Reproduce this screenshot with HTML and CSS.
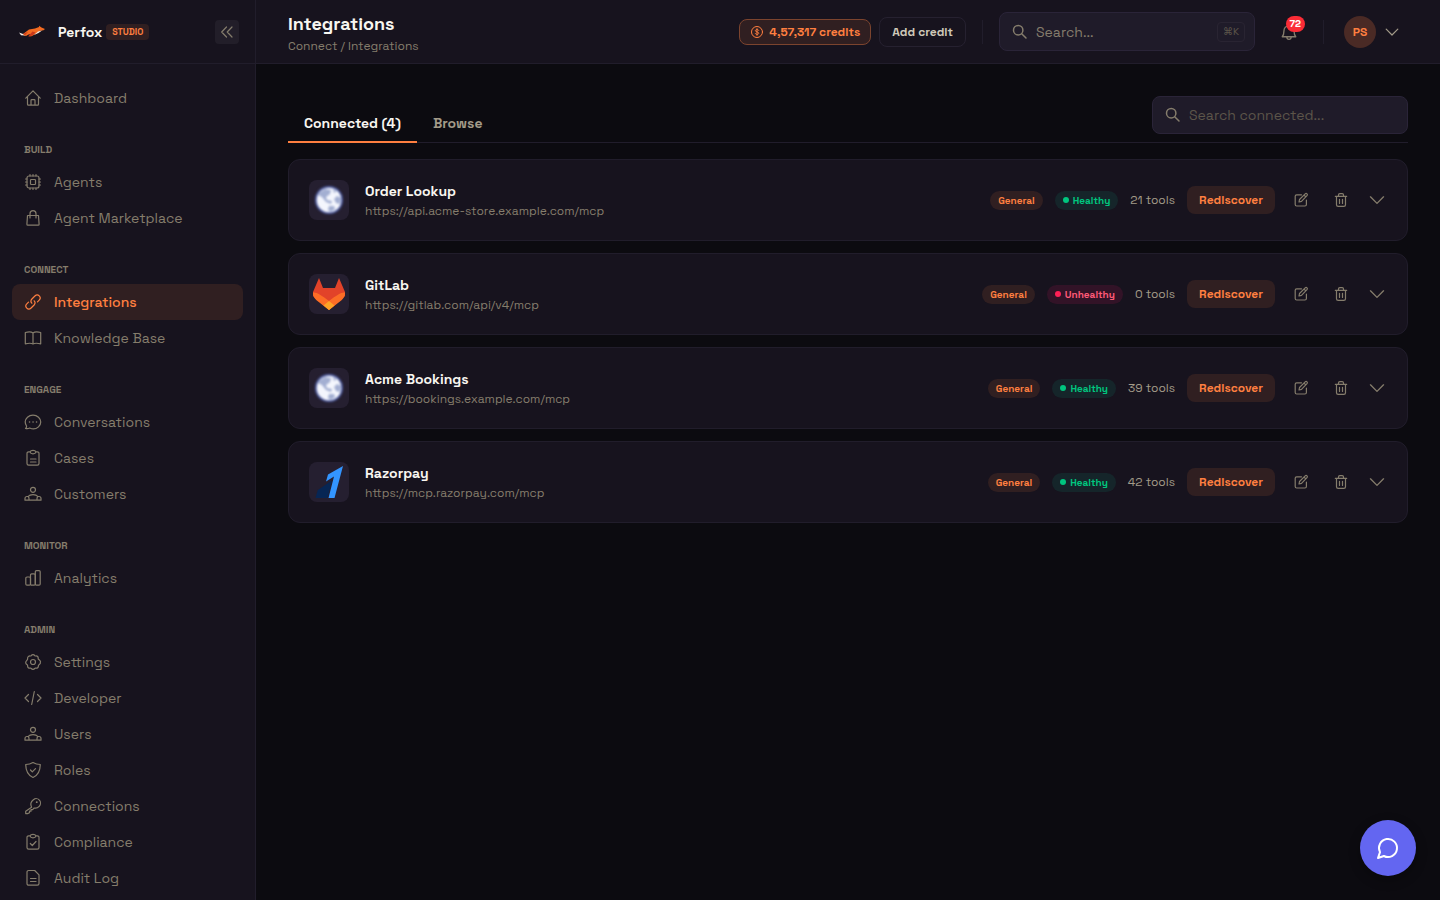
FILE: index.html
```html
<!DOCTYPE html>
<html lang="en">
  <head>
    <meta charset="UTF-8" />
    <meta name="viewport" content="width=device-width, initial-scale=1.0" />
    <title>Integrations - Perfox Studio</title>
    <link rel="stylesheet" href="styles.css">
  </head>
  <body>
    <!-- Shared icons -->
    <svg class="sprite" aria-hidden="true">
      <symbol id="i-search" viewBox="0 0 16 16"><circle cx="6.2" cy="6.2" r="4.700" /><path d="M9.700 9.700l4.300 4.300" /></symbol>
      <symbol id="i-users" viewBox="0 0 18 18"><circle cx="9" cy="4.800" r="2.500" /><path d="M1 15.200h16v-1.700c0-1.200-.8-2-2-2h-1.200C13 10.500 11.500 9.700 9 9.700s-4 .8-4.800 1.800H3c-1.200 0-2 .8-2 2zM5 15.200v-1.500c0-.9-.2-1.600-.8-2.200M13 15.200v-1.500c0-.9.2-1.600.8-2.200" /></symbol>
      <symbol id="i-chevron" viewBox="0 0 16 16"><path d="M2.200 5.200L8 11l5.800-5.800" /></symbol>
      <symbol id="i-edit" viewBox="0 0 16 16"><path d="M8.500 2.800H3.700c-1 0-1.500.6-1.500 1.500v8.200c0 .9.600 1.500 1.500 1.500h8.200c.9 0 1.500-.6 1.500-1.500V8M6 10l.5-2.500 5.700-5.700c.5-.5 1.300-.5 1.800 0s.5 1.300 0 1.800L8.500 9.400zM11 3l1.800 1.800" /></symbol>
      <symbol id="i-trash" viewBox="0 0 16 16"><path d="M2.300 4.300h11.400M3.500 4.300v8.400c0 1 .7 1.700 1.700 1.700h5.600c1 0 1.700-.7 1.700-1.700V4.300M5.500 4.300V3c0-.8.500-1.300 1.300-1.300h2.400c.8 0 1.300.5 1.300 1.300v1.300M6.500 7.300v4.200M9.500 7.300v4.200" /></symbol>
      <symbol id="i-globe" viewBox="0 0 32 32">
        <circle cx="16" cy="16" r="14" fill="#4d5b9f" stroke="none" />
        <circle cx="16" cy="16" r="12.300" fill="#f4f6fd" stroke="none" />
        <path d="M7 8l5-3 6 1-1 4-4 3 1 3 5 1-1 3-5-2-4-5-4-2zM20 5l4 2-3 2zM24 12l4 2-1 6-4-1-2-4zM16 22l5 0 1 3-4 3-3-2z" fill="#a3afd2" stroke="none" />
      </symbol>
    </svg>

    <div class="app">
      <aside class="sidebar">
        <div class="brand">
          <svg class="brand-logo" viewBox="0 0 28 14" aria-hidden="true">
            <path d="M1 7.500L5 9l3.500-.3L7 10.500l-4-.2z" fill="#f4ede6" />
            <path d="M5 9l6-4.500 6-1 4-1.500L21 .8l2.500 1.700L27 4l-1.500 1.300-4 .7-4 3-4 2.200-2.500.3 2.500-2.500-3 .5L8 11l-1.500-.5z" fill="#f26a21" />
            <path d="M10 11.500l4.500-5 3 1-3 3zM5 9l5-2-3 3z" fill="#c8371b" />
            <path d="M16 10l4-3.500 4-1-3.500 2.500z" fill="#f4ede6" />
          </svg>
          <span class="brand-name">Perfox</span>
          <span class="brand-tag">STUDIO</span>
          <button class="collapse" type="button" aria-label="Collapse sidebar">
            <svg class="icon" viewBox="0 0 16 16"><path d="M7.500 3L2.700 8l4.800 5M13 3L8.200 8l4.800 5" /></svg>
          </button>
        </div>

        <nav class="nav" aria-label="Main">
          <a class="nav-item" href="#">
            <svg class="nav-icon" viewBox="0 0 18 18"><path d="M1.800 9.200L9 1.800l7.200 7.400M3.500 7.800v7.500c0 .6.300.9.900.9h9.200c.6 0 .9-.3.900-.9V7.800M7 16v-4.500c0-.5.300-.8.800-.8h2.400c.5 0 .8.300.8.800V16" /></svg>
            Dashboard
          </a>

          <h2 class="nav-title">BUILD</h2>
          <a class="nav-item" href="#">
            <svg class="nav-icon" viewBox="0 0 18 18"><rect x="3" y="3" width="12" height="12" rx="2" /><rect x="6.500" y="6.500" width="5" height="5" rx=".8" /><path d="M6 3V1.500M9 3V1.500M12 3V1.500M6 16.500V15M9 16.500V15M12 16.500V15M3 6H1.500M3 9H1.500M3 12H1.500M16.500 6H15M16.500 9H15M16.500 12H15" /></svg>
            Agents
          </a>
          <a class="nav-item" href="#">
            <svg class="nav-icon" viewBox="0 0 18 18"><path d="M3.500 6.500h11l.6 8.700c0 .6-.3 1-.9 1H3.800c-.6 0-.9-.4-.9-1zM6 9V4.800C6 3 7.300 1.700 9 1.700s3 1.300 3 3.100V9" /></svg>
            Agent Marketplace
          </a>

          <h2 class="nav-title">CONNECT</h2>
          <a class="nav-item active" href="#" aria-current="page">
            <svg class="nav-icon" viewBox="0 0 18 18"><path d="M7.800 10.200c-1.100-1.300-1-3 .1-4.200l3-3c1.300-1.300 3.200-1.300 4.300-.2 1.200 1.200 1.200 3.100 0 4.300l-1.700 1.700M10.200 7.800c1.100 1.300 1 3-.1 4.200l-3 3c-1.300 1.300-3.200 1.300-4.300.2-1.200-1.200-1.200-3.100 0-4.300l1.700-1.700" /></svg>
            Integrations
          </a>
          <a class="nav-item" href="#">
            <svg class="nav-icon" viewBox="0 0 18 18"><path d="M9 4C7.500 2.800 4.500 2.700 1.300 3.500v11.300c3.200-.7 6.200-.7 7.700.2 1.500-.9 4.500-.9 7.700-.2V3.500C13.500 2.700 10.500 2.800 9 4zM9 4v11" /></svg>
            Knowledge Base
          </a>

          <h2 class="nav-title">ENGAGE</h2>
          <a class="nav-item" href="#">
            <svg class="nav-icon" viewBox="0 0 18 18"><path d="M1.500 15.500c1-.8 1.300-1.800.9-2.800C.800 10 1 6.500 3.500 4.200 6.500 1.500 11.500 1.500 14.500 4.200c3 2.800 3 7 0 9.700-2.400 2.100-6 2.500-8.800 1.100-1.200.7-2.700.9-4.200.5z" /><path d="M5.500 9h.1M9 9h.1M12.500 9h.1" stroke-width="1.500" /></svg>
            Conversations
          </a>
          <a class="nav-item" href="#">
            <svg class="nav-icon" viewBox="0 0 18 18"><path d="M6 2.800H4.700c-1 0-1.700.7-1.700 1.700v10c0 1 .7 1.700 1.700 1.700h8.600c1 0 1.700-.7 1.700-1.700v-10c0-1-.7-1.700-1.700-1.700H12M6 2.800C6.500 1.800 7.500 1.300 9 1.300s2.500.5 3 1.500c-.3 1.200-1.300 2-3 2s-2.700-.8-3-2zM6.500 10h5.500M6.500 13h5.500" /></svg>
            Cases
          </a>
          <a class="nav-item" href="#">
            <svg class="nav-icon"><use href="#i-users" /></svg>
            Customers
          </a>

          <h2 class="nav-title">MONITOR</h2>
          <a class="nav-item" href="#">
            <svg class="nav-icon" viewBox="0 0 18 18"><rect x="1.800" y="8" width="4.700" height="8.200" rx="1.200" /><rect x="6.500" y="4.800" width="4.800" height="11.400" rx="1.200" /><rect x="11.300" y="1.600" width="4.900" height="14.600" rx="1.200" /></svg>
            Analytics
          </a>

          <h2 class="nav-title">ADMIN</h2>
          <a class="nav-item" href="#">
            <svg class="nav-icon" viewBox="0 0 18 18"><path d="M7.200 2.700C8.200 1.300 9.800 1.300 10.800 2.700Q11.100 3.100 11.600 3c1.700-.3 2.800.8 2.600 2.500q-.1.500.3.800c1.700 1.300 2.300 2.300 1.900 2.700.4 1.200-.2 2-1.600 2.900q-.5.400-.4.900c.1 1.700-1.100 2.600-2.700 2.300q-.6-.1-.9.300c-1 1.400-2.600 1.400-3.600 0q-.3-.4-.9-.3c-1.600.3-2.800-.6-2.700-2.300.1-.5 0-.7-.4-1C1.300 10.800 1.200 9 2.800 7.300q.8-.6.800-1.300C3.300 4 4.700 2.800 6.400 3q.5.100.8-.3z" /><circle cx="9" cy="9" r="2.500" /></svg>
            Settings
          </a>
          <a class="nav-item" href="#">
            <svg class="nav-icon" viewBox="0 0 18 18"><path d="M4.500 5.500L1 9l3.500 3.500M13.500 5.500L17 9l-3.500 3.500M10.300 2.500L7.700 15.500" /></svg>
            Developer
          </a>
          <a class="nav-item" href="#">
            <svg class="nav-icon"><use href="#i-users" /></svg>
            Users
          </a>
          <a class="nav-item" href="#">
            <svg class="nav-icon" viewBox="0 0 18 18"><path d="M9 1.500c2.200 1.400 4.600 2 7.300 2-.1 6.300-2.200 10.800-7.300 13-5.100-2.200-7.200-6.700-7.300-13 2.700 0 5.100-.6 7.300-2zM6.500 9l1.800 1.800 3.200-3.200" /></svg>
            Roles
          </a>
          <a class="nav-item" href="#">
            <svg class="nav-icon" viewBox="0 0 18 18"><path d="M7.600 10.200C6.300 7.600 7 4.500 9.400 2.700c2-1.500 4.700-1.200 6 .4 1.500 1.700 1.400 4.500-.2 6.200-1.800 1.900-3.500 2.100-5 1.700L8.600 12.600H7v1.600H5.500v1.600l-2 .8H1.700v-2.400z" /><path d="M12.700 5.200h.1" stroke-width="1.800" /></svg>
            Connections
          </a>
          <a class="nav-item" href="#">
            <svg class="nav-icon" viewBox="0 0 18 18"><path d="M6 2.800H4.700c-1 0-1.700.7-1.700 1.700v10c0 1 .7 1.700 1.700 1.700h8.600c1 0 1.700-.7 1.700-1.700v-10c0-1-.7-1.700-1.700-1.700H12M6 2.800C6.500 1.800 7.500 1.300 9 1.300s2.500.5 3 1.500c-.3 1.200-1.300 2-3 2s-2.700-.8-3-2zM6.300 10.500l2 2 3.700-4" /></svg>
            Compliance
          </a>
          <a class="nav-item" href="#">
            <svg class="nav-icon" viewBox="0 0 18 18"><path d="M4.700 1.500h6L15 5.800v8.700c0 1-.7 1.700-1.700 1.700H4.700c-1 0-1.700-.7-1.700-1.700V3.200c0-1 .7-1.700 1.700-1.700zM6.500 9.500h5.500M6.500 12.500h5.500" /></svg>
            Audit Log
          </a>
        </nav>
      </aside>

      <div class="page">
        <header class="topbar">
          <div class="heading">
            <h1>Integrations</h1>
            <p class="breadcrumb">Connect / Integrations</p>
          </div>
          <div class="credit-group">
            <a class="credits" href="#">
              <svg class="credits-icon" viewBox="0 0 14 14"><circle cx="7" cy="7" r="5.500" /><path d="M8.700 5.400C8.300 4.800 7.700 4.600 7 4.600c-1 0-1.600.4-1.600 1.100C5.400 7.300 8.700 6.500 8.700 8.200c0 .8-.7 1.200-1.700 1.200-.8 0-1.400-.3-1.700-.9M7 3.700v6.600" /></svg>
              4,57,317 credits
            </a>
            <button class="add-credit" type="button">Add credit</button>
          </div>
          <span class="divider"></span>
          <div class="search">
            <svg class="icon"><use href="#i-search" /></svg>
            <input type="text" placeholder="Search..." aria-label="Search" />
            <kbd>⌘K</kbd>
          </div>
          <button class="bell" type="button" aria-label="Notifications">
            <svg class="nav-icon" viewBox="0 0 16 16"><path d="M2 12.200c1.300-1.300 1.500-2.700 1.500-5C3.500 4.500 5.300 2.500 8 2.500s4.500 2 4.500 4.700c0 2.300.2 3.700 1.500 5zM6 12.500c.1 1.300.8 2 2 2s1.900-.7 2-2" /></svg>
            <span class="bell-count">72</span>
          </button>
          <span class="divider"></span>
          <button class="account" type="button" aria-label="Account menu">
            <span class="avatar">PS</span>
            <svg class="icon"><use href="#i-chevron" /></svg>
          </button>
        </header>

        <main class="content">
          <div class="tabs-row">
            <div class="tabs">
              <button class="tab active" type="button">Connected (4)</button>
              <button class="tab" type="button">Browse</button>
            </div>
            <div class="search filter">
              <svg class="icon"><use href="#i-search" /></svg>
              <input type="text" placeholder="Search connected..." aria-label="Search connected" />
            </div>
          </div>

          <ul class="cards">
            <li class="card">
              <span class="logo"><svg class="globe"><use href="#i-globe" /></svg></span>
              <div class="info">
                <h3>Order Lookup</h3>
                <p>https://api.acme-store.example.com/mcp</p>
              </div>
              <span class="pill general">General</span>
              <span class="pill healthy">Healthy</span>
              <span class="tools">21 tools</span>
              <button class="rediscover" type="button">Rediscover</button>
              <div class="actions">
                <button type="button" aria-label="Edit"><svg class="icon"><use href="#i-edit" /></svg></button>
                <button type="button" aria-label="Delete"><svg class="icon"><use href="#i-trash" /></svg></button>
                <button class="expand" type="button" aria-label="Expand"><svg class="nav-icon"><use href="#i-chevron" /></svg></button>
              </div>
            </li>
            <li class="card">
              <span class="logo">
                <svg class="logo-full" viewBox="0 0 32 32" aria-hidden="true">
                  <path d="M16 32L0 18V14L6 0l4 10h12L26 0l6 14v4z" fill="#e24329" />
                  <path d="M0 14.500C4 14 8 17 16 23c8-6 12-9 16-8.500.3 3-.8 5.500-3.500 7.800L16 32 3.500 22.300C.8 20-.3 17.500 0 14.500z" fill="#fc6d26" />
                  <path d="M16 23l5.500 4.500L16 32l-5.500-4.500z" fill="#fca326" />
                </svg>
              </span>
              <div class="info">
                <h3>GitLab</h3>
                <p>https://gitlab.com/api/v4/mcp</p>
              </div>
              <span class="pill general">General</span>
              <span class="pill unhealthy">Unhealthy</span>
              <span class="tools">0 tools</span>
              <button class="rediscover" type="button">Rediscover</button>
              <div class="actions">
                <button type="button" aria-label="Edit"><svg class="icon"><use href="#i-edit" /></svg></button>
                <button type="button" aria-label="Delete"><svg class="icon"><use href="#i-trash" /></svg></button>
                <button class="expand" type="button" aria-label="Expand"><svg class="nav-icon"><use href="#i-chevron" /></svg></button>
              </div>
            </li>
            <li class="card">
              <span class="logo"><svg class="globe"><use href="#i-globe" /></svg></span>
              <div class="info">
                <h3>Acme Bookings</h3>
                <p>https://bookings.example.com/mcp</p>
              </div>
              <span class="pill general">General</span>
              <span class="pill healthy">Healthy</span>
              <span class="tools">39 tools</span>
              <button class="rediscover" type="button">Rediscover</button>
              <div class="actions">
                <button type="button" aria-label="Edit"><svg class="icon"><use href="#i-edit" /></svg></button>
                <button type="button" aria-label="Delete"><svg class="icon"><use href="#i-trash" /></svg></button>
                <button class="expand" type="button" aria-label="Expand"><svg class="nav-icon"><use href="#i-chevron" /></svg></button>
              </div>
            </li>
            <li class="card">
              <span class="logo">
                <svg class="logo-full" viewBox="0 0 32 32" aria-hidden="true">
                  <path d="M2.500 32l2.300-8L19 14.500 14.500 32z" fill="#072654" />
                  <path d="M13 15.500l2-7L30 0l-8.500 32h-6l5.500-21.500z" fill="#3395ff" />
                </svg>
              </span>
              <div class="info">
                <h3>Razorpay</h3>
                <p>https://mcp.razorpay.com/mcp</p>
              </div>
              <span class="pill general">General</span>
              <span class="pill healthy">Healthy</span>
              <span class="tools">42 tools</span>
              <button class="rediscover" type="button">Rediscover</button>
              <div class="actions">
                <button type="button" aria-label="Edit"><svg class="icon"><use href="#i-edit" /></svg></button>
                <button type="button" aria-label="Delete"><svg class="icon"><use href="#i-trash" /></svg></button>
                <button class="expand" type="button" aria-label="Expand"><svg class="nav-icon"><use href="#i-chevron" /></svg></button>
              </div>
            </li>
          </ul>
        </main>
      </div>
    </div>

    <button class="chat" type="button" aria-label="Open chat">
      <svg class="chat-icon" viewBox="0 0 24 24"><path d="M7.900 20A9 9 0 1 0 4 16.100L2 22z" /></svg>
    </button>
  </body>
</html>
```

FILE: styles.css
```css
* {
    box-sizing: border-box;
}
body {
    margin: 0;
    font-family: "Space Grotesk", Inter, sans-serif;
    font-size: 14px;
    line-height: 20px;
    background-color: #0c0b10;
    color: #f8f6f0;
}
h1, h2, h3, p, ul {
    margin: 0;
    padding: 0;
}
a {
    text-decoration: none;
}
button, input, kbd {
    font: inherit;
    color: inherit;
}
button {
    background: none;
    border: none;
    padding: 0;
    cursor: pointer;
}
svg {
    display: block;
    flex-shrink: 0;
    fill: none;
    stroke: currentColor;
    stroke-width: 1.2;
    stroke-linecap: round;
    stroke-linejoin: round;
}
.sprite {
    position: absolute;
    width: 0;
    height: 0;
}
.icon {
    width: 16px;
    height: 16px;
}
.app {
    display: flex;
    height: 100vh;
}

/* Sidebar */
.sidebar {
    display: flex;
    flex-direction: column;
    width: 256px;
    flex-shrink: 0;
    background-color: #17131e;
    border-right: 1px solid #211d2b;
}
.brand {
    display: flex;
    align-items: center;
    height: 64px;
    flex-shrink: 0;
    padding: 0 16px;
    border-bottom: 1px solid #211d2b;
}
.brand-logo {
    width: 32px;
    height: 14px;
    margin-right: 10px;
    stroke: none;
}
.brand-name {
    font-weight: 700;
}
.brand-tag {
    margin-left: 4px;
    padding: 0 6px;
    border-radius: 4px;
    background-color: #301f21;
    color: #ff7f40;
    font-size: 9px;
    font-weight: 700;
    line-height: 16px;
}
.collapse {
    display: grid;
    place-items: center;
    width: 24px;
    height: 24px;
    margin-left: auto;
    border-radius: 4px;
    background-color: #221e29;
    color: #857d6c;
}
.nav {
    flex: 1;
    min-height: 0;
    overflow: hidden;
    padding: 16px 12px 0;
}
.nav-item {
    display: flex;
    align-items: center;
    gap: 12px;
    height: 36px;
    padding: 0 12px;
    border-radius: 8px;
    color: #857d6c;
}
.nav-item.active {
    background-color: #301f21;
    color: #ff7f40;
    font-weight: 500;
}
.nav-icon {
    width: 18px;
    height: 18px;
}
.nav-title {
    margin-top: 24px;
    padding: 2px 12px 6px;
    color: #857d6c;
    font-size: 10px;
    font-weight: 700;
    line-height: 16px;
}

/* Top bar */
.page {
    display: flex;
    flex-direction: column;
    flex: 1;
    min-width: 0;
}
.topbar {
    display: flex;
    align-items: center;
    gap: 16px;
    height: 64px;
    padding: 0 40px 0 32px;
    background-color: #17131e;
    border-bottom: 1px solid #211d2b;
}
.heading {
    flex: 1;
    padding-top: 4px;
}
.heading h1 {
    font-size: 18px;
    font-weight: 600;
    line-height: 24px;
}
.breadcrumb {
    color: #857d6c;
    font-size: 12px;
}
.credit-group {
    display: flex;
    align-items: center;
    gap: 8px;
}
.credits, .add-credit {
    display: flex;
    align-items: center;
    gap: 5px;
    height: 26px;
    padding: 0 10px;
    border: 1px solid #7c442e;
    border-radius: 8px;
    background-color: #301f21;
    color: #ff7f40;
    font-size: 12px;
    font-weight: 600;
}
.add-credit {
    height: 30px;
    padding: 0 12px;
    border-color: #262130;
    background: none;
    color: #cfc8b8;
}
.credits-icon {
    width: 14px;
    height: 14px;
    stroke-width: 1;
}
.divider {
    width: 1px;
    height: 24px;
    background-color: #211d2b;
}
.search {
    display: flex;
    align-items: center;
    gap: 8px;
    width: 256px;
    height: 39px;
    padding: 0 9px 0 12px;
    border: 1px solid #2a2438;
    border-radius: 8px;
    background-color: #1f1b29;
    color: #857d6c;
}
.search .icon {
    stroke-width: 1.5;
}
.search input {
    flex: 1;
    min-width: 0;
    padding: 0;
    border: none;
    outline: none;
    background: none;
    font-size: 14px;
}
.search input::placeholder {
    color: #857d6c;
    opacity: 1;
}
.search kbd {
    padding: 0 5px;
    border: 1px solid #292432;
    border-radius: 4px;
    color: #5c5549;
    font-size: 10px;
    line-height: 18px;
}
.search.filter {
    height: 38px;
}
.search.filter input::placeholder {
    color: #5c5549;
}
.bell {
    position: relative;
    display: grid;
    place-items: center;
    width: 36px;
    height: 36px;
    color: #857d6c;
}
.bell-count {
    position: absolute;
    top: 2px;
    right: 2px;
    padding: 0 4px;
    border-radius: 8px;
    background-color: #fb2c36;
    color: #fff;
    font-size: 10px;
    font-weight: 700;
    line-height: 16px;
}
.account {
    display: flex;
    align-items: center;
    gap: 8px;
    padding-left: 4px;
    color: #a39b89;
}
.avatar {
    width: 32px;
    border-radius: 50%;
    background-color: #4a2a25;
    color: #ff7f40;
    font-size: 12px;
    font-weight: 700;
    line-height: 32px;
    text-align: center;
}

/* Content */
.content {
    padding: 32px;
}
.tabs-row {
    display: flex;
    justify-content: space-between;
    border-bottom: 1px solid #211d2b;
}
.tabs {
    display: flex;
    align-items: flex-end;
    margin-bottom: -1px;
}
.tab {
    height: 38px;
    padding: 0 16px;
    border-bottom: 2px solid transparent;
    color: #a39b89;
    font-weight: 600;
}
.tab.active {
    border-color: #ff7f40;
    color: #f8f6f0;
}
.filter {
    margin-bottom: 8px;
}
.cards {
    display: grid;
    gap: 12px;
    margin-top: 16px;
    list-style: none;
}
.card {
    display: flex;
    align-items: center;
    gap: 12px;
    height: 82px;
    padding: 0 20px;
    border: 1px solid #211d2b;
    border-radius: 12px;
    background-color: #17131e;
}
.logo {
    display: grid;
    place-items: center;
    width: 40px;
    height: 40px;
    border-radius: 8px;
    background-color: #251f30;
}
.globe, .logo-full {
    width: 32px;
    height: 32px;
    stroke: none;
}
.globe {
    filter: blur(1px);
}
.info {
    flex: 1;
    margin-left: 4px;
    padding-top: 2px;
}
.info h3 {
    font-size: 14px;
    font-weight: 600;
}
.info p {
    color: #857d6c;
    font-size: 12px;
}
.pill {
    display: flex;
    align-items: center;
    gap: 4px;
    padding: 0 8px;
    border-radius: 10px;
    font-size: 10px;
    font-weight: 600;
    line-height: 19px;
}
.pill.general {
    background-color: #301f21;
    color: #ff7f40;
}
.pill.healthy {
    background-color: #15252a;
    color: #00c67f;
}
.pill.unhealthy {
    background-color: #321327;
    color: #ff5a78;
}
.pill.healthy::before, .pill.unhealthy::before {
    content: "";
    width: 6px;
    height: 6px;
    border-radius: 50%;
    background-color: #00c67f;
}
.pill.unhealthy::before {
    background-color: #ff2056;
}
.tools {
    color: #a39b89;
    font-size: 12px;
}
.rediscover {
    height: 28px;
    padding: 0 12px;
    border-radius: 8px;
    background-color: #301f21;
    color: #ff7f40;
    font-size: 12px;
    font-weight: 600;
}
.actions {
    display: flex;
    align-items: center;
    gap: 12px;
    color: #857d6c;
}
.actions button {
    display: grid;
    place-items: center;
    width: 28px;
    height: 28px;
}
.actions .expand {
    width: 20px;
}

/* Chat launcher floats over the page */
.chat {
    position: fixed;
    right: 24px;
    bottom: 24px;
    display: grid;
    place-items: center;
    width: 56px;
    height: 56px;
    border-radius: 50%;
    background-color: #6366f1;
    color: #fff;
    box-shadow: 0 4px 12px rgba(0, 0, 0, 0.3);
}
.chat-icon {
    width: 24px;
    height: 24px;
    stroke-width: 2;
}
```
